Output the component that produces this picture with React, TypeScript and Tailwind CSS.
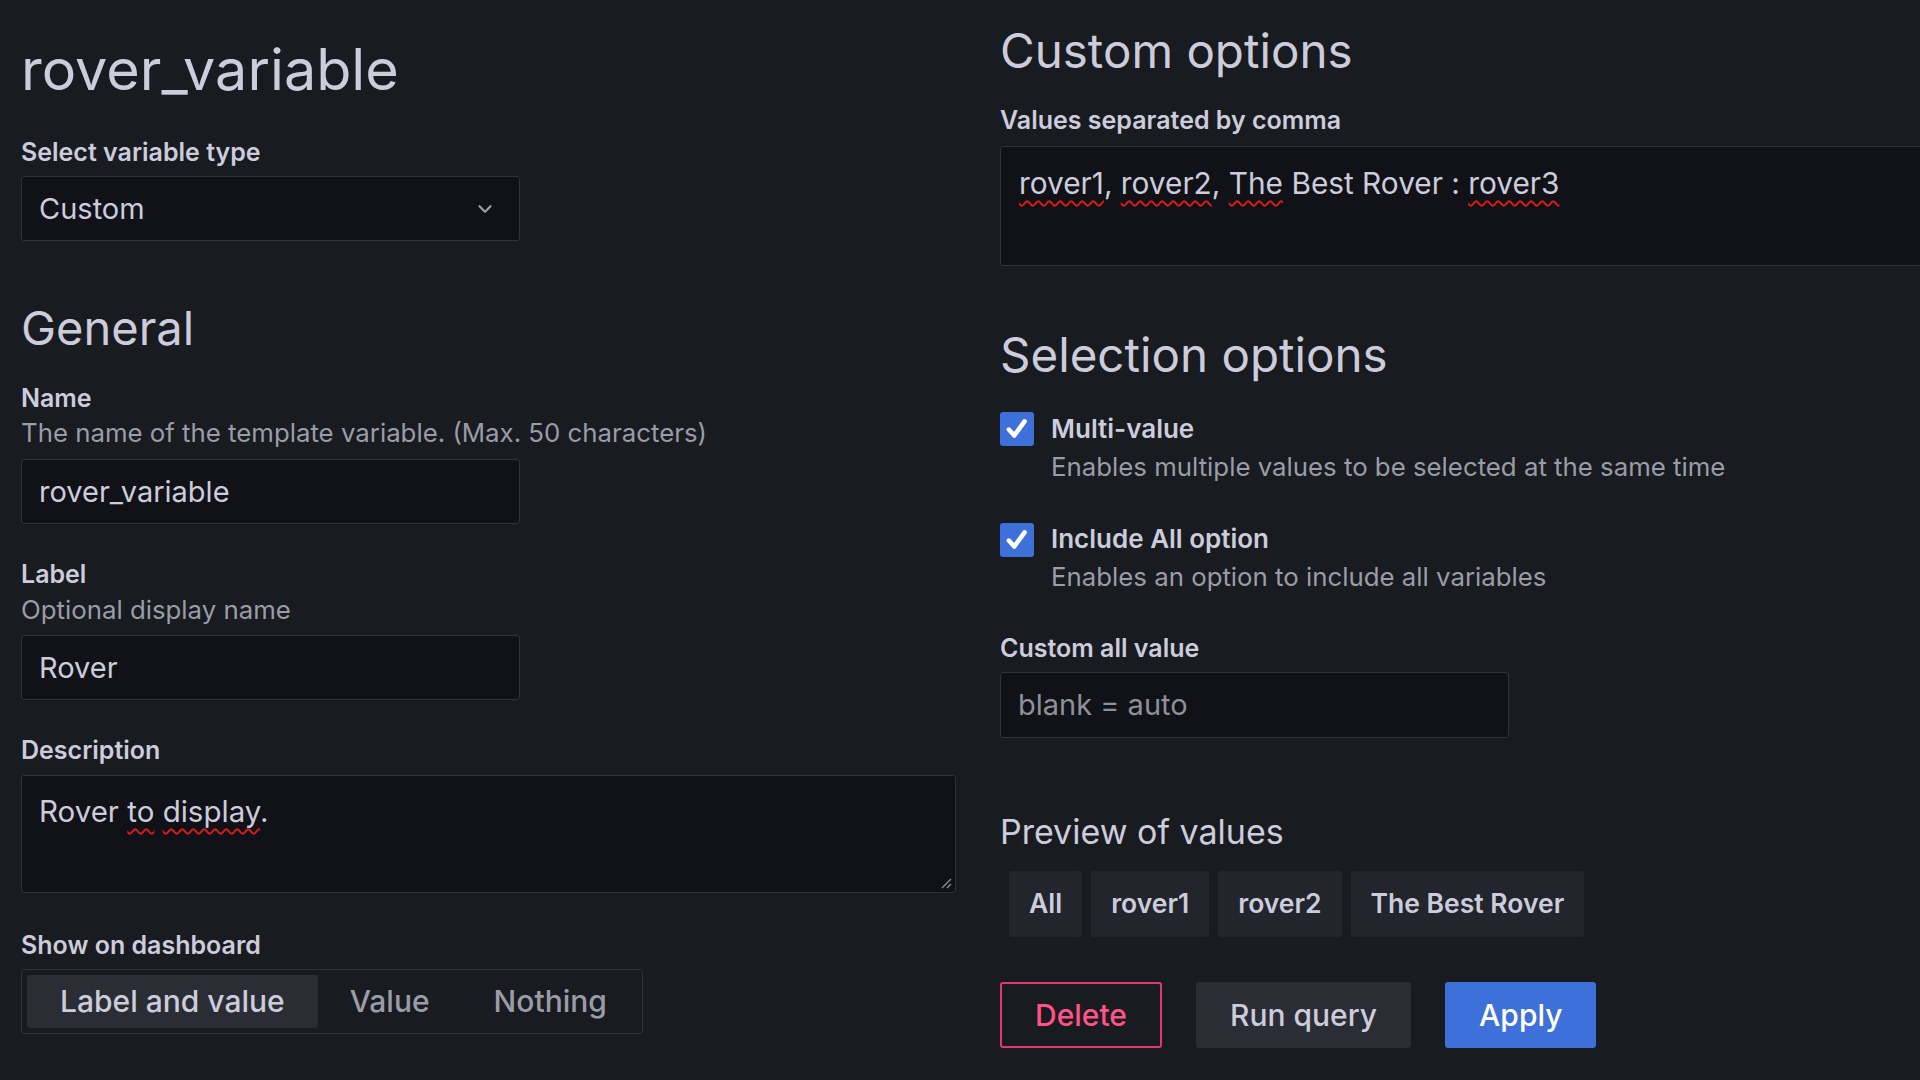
import { ChevronDown } from 'lucide-react';

const text = 'text-[#ccccdc]';
const muted = 'text-[#9a9ca8]';

function FieldLabel({ children, className = '' }: { children: React.ReactNode; className?: string }) {
  return <div className={`text-[25px] font-semibold leading-[30px] ${text} ${className}`}>{children}</div>;
}

function Hint({ children, className = '' }: { children: React.ReactNode; className?: string }) {
  return <div className={`text-[25.8px] leading-[30px] ${muted} ${className}`}>{children}</div>;
}

function Box({ children, className = '' }: { children: React.ReactNode; className?: string }) {
  return (
    <div className={`flex h-[65px] items-center rounded-[3px] border border-[#303238] bg-[#111217] px-[17px] text-[29px] ${className}`}>
      {children}
    </div>
  );
}

function Typo({ children }: { children: React.ReactNode }) {
  return (
    <span className="underline decoration-[#e01b1b] decoration-wavy decoration-[1.5px] underline-offset-[6px]">
      {children}
    </span>
  );
}

function Check() {
  return (
    <div className="flex h-[34px] w-[34px] shrink-0 items-center justify-center rounded-[3px] bg-[#3d71d9]">
      <svg width="26" height="26" viewBox="0 0 24 24" fill="none">
        <path d="M4.5 12.5 L9.5 18 L19 5" stroke="white" strokeWidth="4.2" strokeLinecap="round" strokeLinejoin="round" />
      </svg>
    </div>
  );
}

function Chip({ label }: { label: string }) {
  return (
    <div className={`flex h-[66px] items-center rounded-[3px] bg-[#22252b] px-[20px] text-[26.5px] font-semibold ${text}`}>
      {label}
    </div>
  );
}

export default function App() {
  return (
    <div className="flex h-[1080px] w-screen overflow-hidden bg-[#181b1f] pl-[21px] [font-family:Inter,'Noto_Sans',sans-serif]">
      {/* left: general settings */}
      <div className="flex w-[935px] shrink-0 flex-col pt-[36px]">
        <h1 className={`text-[57.5px] font-normal leading-[67px] ${text}`}>rover_variable</h1>

        <FieldLabel className="mt-[34px]">Select variable type</FieldLabel>
        <Box className="mt-[9px] w-[499px] justify-between">
          <span className={text}>Custom</span>
          <ChevronDown size={22} strokeWidth={2.5} className="mr-[6px] text-[#9a9ca8]" />
        </Box>

        <h2 className={`mt-[59px] text-[47px] font-normal leading-[56px] ${text}`}>General</h2>

        <FieldLabel className="mt-[27px]">Name</FieldLabel>
        <Hint className="mt-[5px]">The name of the template variable. (Max. 50 characters)</Hint>
        <Box className={`mt-[11px] w-[499px] ${text}`}>rover_variable</Box>

        <FieldLabel className="mt-[35px]">Label</FieldLabel>
        <Hint className="mt-[6px]">Optional display name</Hint>
        <Box className={`mt-[10px] w-[499px] ${text}`}>Rover</Box>

        <FieldLabel className="mt-[35px]">Description</FieldLabel>
        <div className={`relative mt-[10px] h-[118px] w-[935px] rounded-[3px] border border-[#303238] bg-[#111217] px-[17px] pt-[13px] text-[29.5px] leading-[44px] ${text}`}>
          Rover <Typo>to</Typo> <Typo>display</Typo>.
          <svg className="absolute bottom-[3px] right-[3px]" width="12" height="12" viewBox="0 0 12 12">
            <path d="M11 2 L2 11 M11 7 L7 11" stroke="#8e9099" strokeWidth="1.3" />
          </svg>
        </div>

        <FieldLabel className="mt-[37px]">Show on dashboard</FieldLabel>
        <div className="mt-[9px] flex h-[65px] w-fit items-stretch rounded-[3px] border border-[#303238] p-[5px] text-[30px] font-medium">
          <div className={`flex items-center rounded-[3px] bg-[#2a2d33] px-[33px] ${text}`}>Label and value</div>
          <div className={`flex items-center px-[32px] ${muted}`}>Value</div>
          <div className={`flex items-center pl-[32px] pr-[30px] ${muted}`}>Nothing</div>
        </div>
      </div>

      {/* right: custom + selection options */}
      <div className="ml-[44px] flex w-[1000px] shrink-0 flex-col pt-[23px]">
        <h2 className={`text-[47.5px] font-normal leading-[56px] ${text}`}>Custom options</h2>

        <FieldLabel className="mt-[26px]">Values separated by comma</FieldLabel>
        <div className={`mt-[11px] h-[120px] w-[1000px] rounded-[3px] border border-[#303238] bg-[#111217] px-[18px] pt-[14px] text-[29.8px] leading-[44px] ${text}`}>
          <Typo>rover1</Typo>, <Typo>rover2</Typo>, <Typo>The</Typo> Best Rover : <Typo>rover3</Typo>
        </div>

        <h2 className={`mt-[61px] text-[47.5px] font-normal leading-[56px] ${text}`}>Selection options</h2>

        <div className="mt-[29px] flex gap-[17px]">
          <Check />
          <div className="flex flex-col pt-[2px]">
            <FieldLabel className="text-[26px]">Multi-value</FieldLabel>
            <Hint className="mt-[8px]">Enables multiple values to be selected at the same time</Hint>
          </div>
        </div>

        <div className="mt-[41px] flex gap-[17px]">
          <Check />
          <div className="flex flex-col pt-[1px]">
            <FieldLabel className="text-[26px]">Include All option</FieldLabel>
            <Hint className="mt-[8px]">Enables an option to include all variables</Hint>
          </div>
        </div>

        <FieldLabel className="mt-[41px]">Custom all value</FieldLabel>
        <Box className="mt-[9px] h-[66px] w-[509px] text-[#8e909a]">blank = auto</Box>

        <h3 className={`mt-[74px] text-[34px] font-normal leading-[40px] ${text}`}>Preview of values</h3>

        <div className="ml-[9px] mt-[19px] flex gap-[9px]">
          {['All', 'rover1', 'rover2', 'The Best Rover'].map((v) => (
            <Chip key={v} label={v} />
          ))}
        </div>

        <div className="mt-[45px] flex gap-[34px] text-[30px] font-medium">
          <button className="h-[66px] rounded-[3px] border-2 border-[#e0386f] px-[33px] text-[#ff5286]">Delete</button>
          <button className={`h-[66px] rounded-[3px] bg-[#2a2d33] px-[34px] ${text}`}>Run query</button>
          <button className="h-[66px] rounded-[3px] bg-[#3d71d9] px-[34px] text-white">Apply</button>
        </div>
      </div>
    </div>
  );
}
